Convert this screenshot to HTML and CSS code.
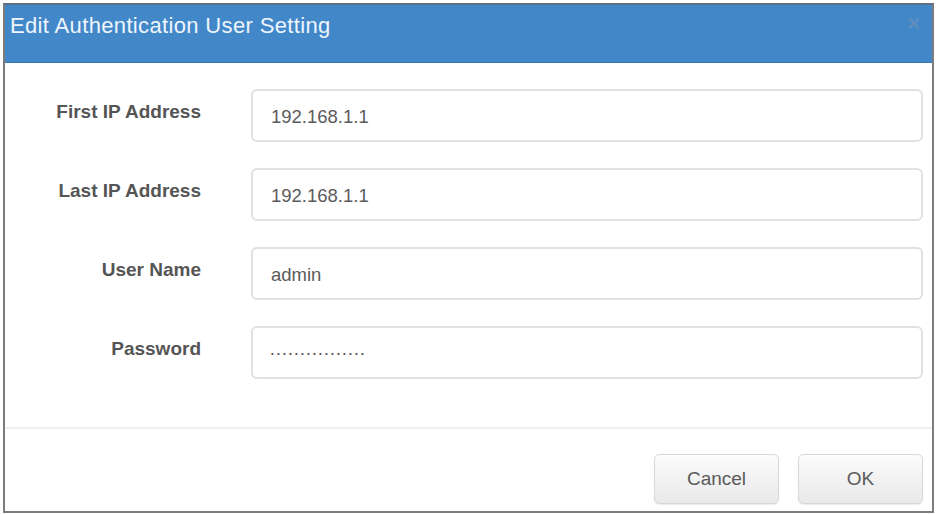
FILE: index.html
```html
<!DOCTYPE html>
<html lang="en">
<head>
<meta charset="utf-8">
<title>Edit Authentication User Setting</title>
<link rel="stylesheet" href="styles.css">
</head>
<body>
<div class="dialog">
  <div class="dialog-header">
    <span class="dialog-title">Edit Authentication User Setting</span>
    <span class="dialog-close">&times;</span>
  </div>
  <form class="dialog-body">
    <div class="field">
      <label class="field-label">First IP Address</label>
      <div class="field-input">192.168.1.1</div>
    </div>
    <div class="field">
      <label class="field-label">Last IP Address</label>
      <div class="field-input">192.168.1.1</div>
    </div>
    <div class="field">
      <label class="field-label">User Name</label>
      <div class="field-input">admin</div>
    </div>
    <div class="field">
      <label class="field-label">Password</label>
      <div class="field-input field-password">&bull;&bull;&bull;&bull;&bull;&bull;&bull;&bull;&bull;&bull;&bull;&bull;&bull;&bull;&bull;&bull;</div>
    </div>
  </form>
  <div class="dialog-footer">
    <button class="btn" type="button">Cancel</button>
    <button class="btn" type="button">OK</button>
  </div>
</div>
</body>
</html>
```

FILE: styles.css
```css
html, body {
  margin: 0;
  padding: 0;
  background: #ffffff;
}

body {
  font-family: "Liberation Sans", Arial, sans-serif;
}

.dialog {
  box-sizing: border-box;
  width: 931px;
  height: 510px;
  margin: 3px 0 0 3px;
  border: 2px solid #7c7c7c;
  border-top-color: #5d6f80;
  background: #ffffff;
  display: flex;
  flex-direction: column;
}

.dialog-header {
  height: 57px;
  flex: none;
  background: #4288c9;
  display: flex;
  justify-content: space-between;
  align-items: flex-start;
  padding: 0 12px 0 5px;
  border-bottom: 1px solid #3a78b2;
}

.dialog-title {
  color: #eef5fc;
  font-size: 22px;
  line-height: 24px;
  margin-top: 9px;
  letter-spacing: 0.35px;
}

.dialog-close {
  color: #5f8dbd;
  font-size: 22px;
  font-weight: bold;
  line-height: 22px;
  margin-top: 8px;
}

.dialog-body {
  margin: 0;
  padding: 26px 9px 0 0;
  display: flex;
  flex-direction: column;
  gap: 26px;
  height: 366px;
  box-sizing: border-box;
  border-bottom: 2px solid #efefef;
  flex: none;
}

.field {
  display: flex;
  align-items: center;
  height: 53px;
}

.field-label {
  width: 196px;
  flex: none;
  text-align: right;
  font-size: 19px;
  font-weight: bold;
  color: #555555;
  margin-top: -7px;
}

.field-input {
  margin-left: 50px;
  flex: 1;
  box-sizing: border-box;
  height: 53px;
  border: 2px solid #e1e1e1;
  border-radius: 6px;
  padding: 2px 18px 0;
  display: flex;
  align-items: center;
  font-size: 18.5px;
  color: #5b5b5b;
}

.field-password {
  font-size: 8px;
  letter-spacing: 3.2px;
  color: #555555;
}

.dialog-footer {
  flex: 1;
  display: flex;
  justify-content: flex-end;
  align-items: flex-start;
  gap: 19px;
  padding: 25px 9px 0 0;
}

.btn {
  width: 125px;
  height: 50px;
  border: 1px solid #d8d8d8;
  border-radius: 5px;
  background: linear-gradient(#fbfbfb, #e9e9e9);
  box-shadow: 0 1px 1px rgba(0, 0, 0, 0.08);
  font-family: "Liberation Sans", Arial, sans-serif;
  font-size: 19px;
  color: #5a5a5a;
  padding: 0;
}
```
